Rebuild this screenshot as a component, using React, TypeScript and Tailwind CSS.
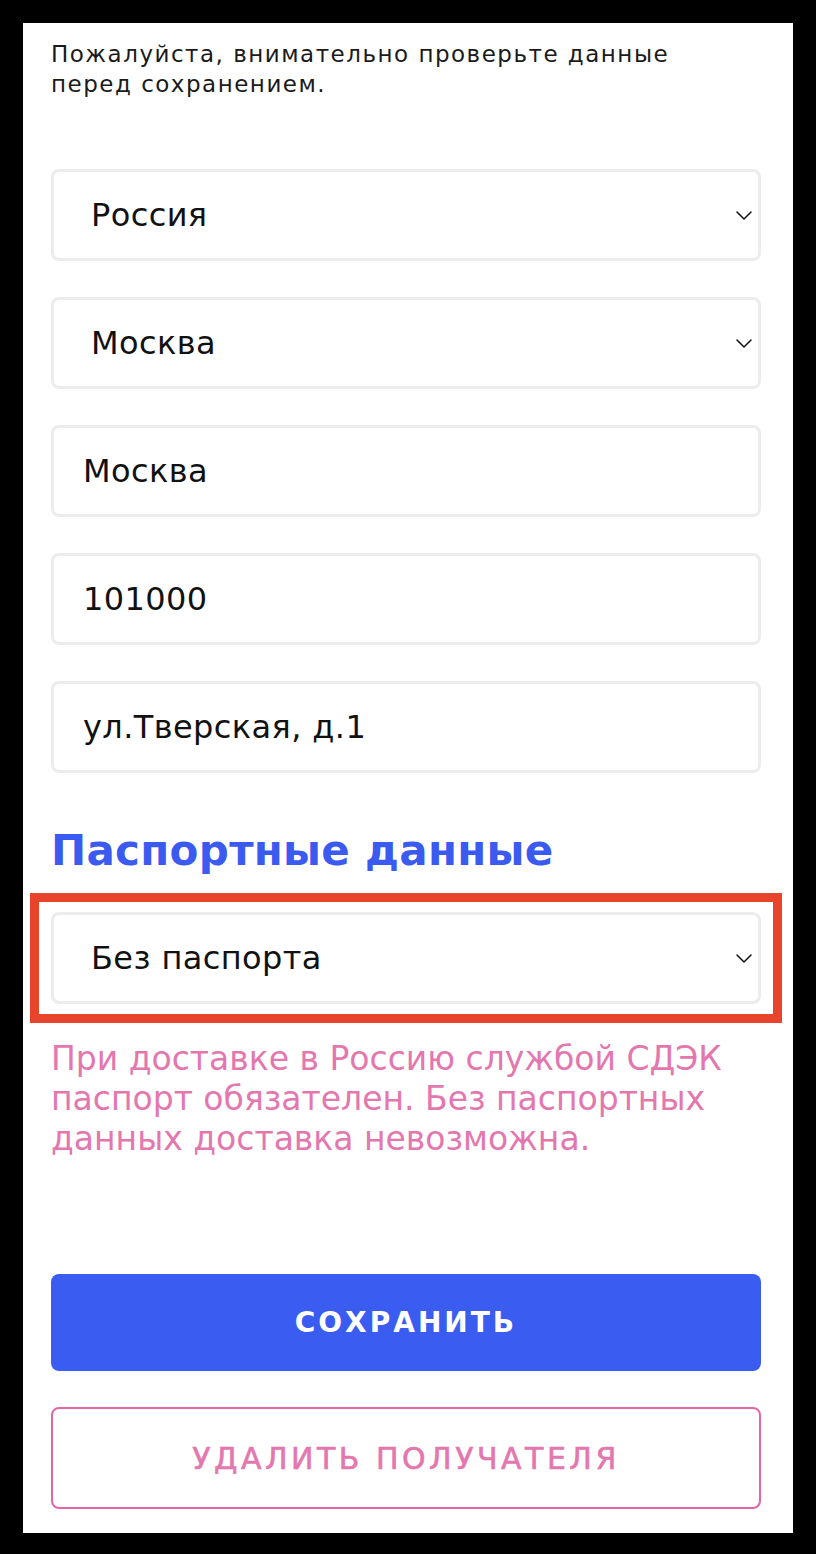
const fields = [
  { value: 'Россия', select: true },
  { value: 'Москва', select: true },
  { value: 'Москва', select: false },
  { value: '101000', select: false },
  { value: 'ул.Тверская, д.1', select: false },
];

function Chevron() {
  return (
    <svg width="16" height="9" viewBox="0 0 16 9" fill="none" className="shrink-0">
      <path d="M1 1l7 7 7-7" stroke="#111" strokeWidth="1.5" strokeLinecap="round" strokeLinejoin="round" />
    </svg>
  );
}

function Field({ value, select }: { value: string; select: boolean }) {
  return (
    <div className="flex h-[92px] items-center justify-between rounded-lg border-[3px] border-[#ececec] bg-white pr-[6px]">
      <span className={`${select ? 'pl-[37px]' : 'pl-[29px]'} text-[32px] tracking-[0.4px] text-[#111]`}>{value}</span>
      {select && <Chevron />}
    </div>
  );
}

export default function App() {
  return (
    <div className="min-h-[1554px] bg-black px-[23px] pt-[23px] font-['DejaVu_Sans',sans-serif]">
      <div className="flex h-[1510px] w-[770px] flex-col bg-white pl-[28px] pr-[32px] pt-[16px]">
        <p className="text-[23px] leading-[30px] tracking-[1.5px] text-[#1a1a1a]">
          Пожалуйста, внимательно проверьте данные
          <br />
          перед сохранением.
        </p>

        <div className="mt-[70px] flex flex-col gap-[36px]">
          {fields.map((f, i) => (
            <Field key={i} value={f.value} select={f.select} />
          ))}
        </div>

        <h2 className="mt-[50px] text-[42px] font-bold leading-[56px] tracking-[0.3px] text-[#3b5bf0]">Паспортные данные</h2>

        <div className="-mx-[21px] mt-[14px] border-[9px] border-[#e8432b] px-[12px] py-[10px]">
          <Field value="Без паспорта" select />
        </div>

        <p className="mt-[16px] text-[33px] leading-[40px] text-[#e377ae]">
          При доставке в Россию службой СДЭК паспорт обязателен. Без паспортных данных доставка невозможна.
        </p>

        <button className="mt-[115px] flex h-[97px] items-center justify-center rounded-lg bg-[#3a5cf0] text-[28px] font-bold tracking-[3px] text-white">
          СОХРАНИТЬ
        </button>

        <button className="mt-[36px] flex h-[102px] items-center justify-center rounded-lg border-2 border-[#e466a8] bg-white text-[30px] tracking-[3.5px] text-[#e377ae] [-webkit-text-stroke:0.6px_#e377ae]">
          УДАЛИТЬ ПОЛУЧАТЕЛЯ
        </button>
      </div>
    </div>
  );
}
